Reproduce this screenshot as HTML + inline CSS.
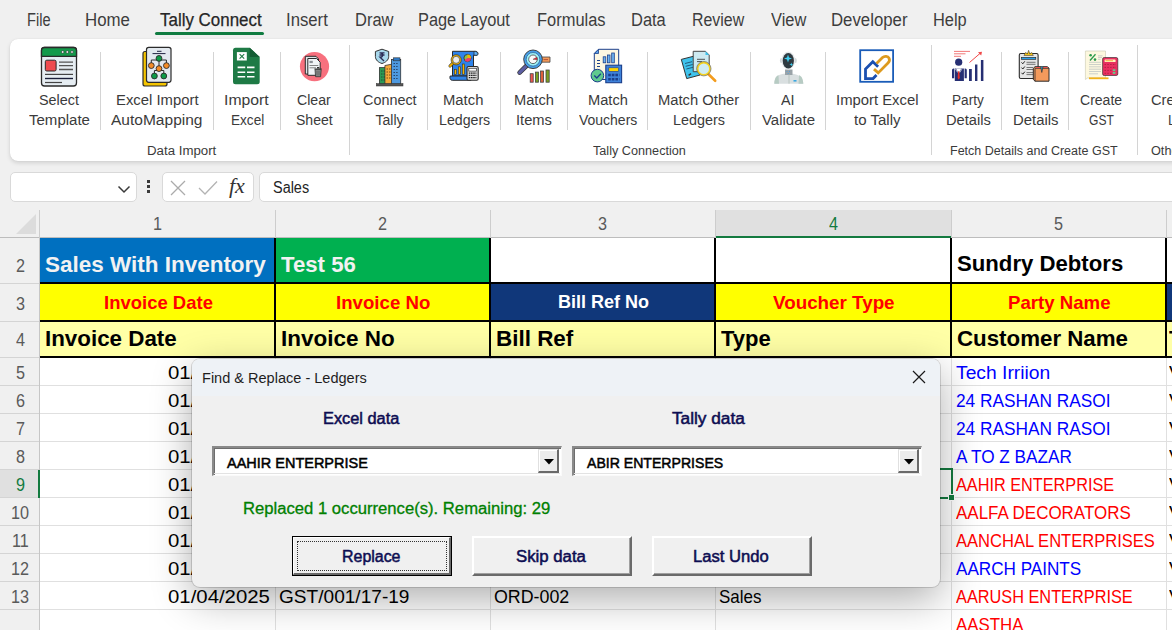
<!DOCTYPE html><html><head><meta charset="utf-8"><style>
*{margin:0;padding:0;box-sizing:border-box}
html,body{width:1172px;height:630px;overflow:hidden;background:#f0f0f0;font-family:"Liberation Sans",sans-serif;position:relative}
.a{position:absolute}
.tx{position:absolute;white-space:nowrap;line-height:1;transform-origin:0 0}
.sep{position:absolute;top:52px;height:78px;width:1px;background:#d4d4d4}
.gsep{position:absolute;top:45px;height:110px;width:1px;background:#d4d4d4}
svg{position:absolute;overflow:visible}
</style></head><body>
<div class="tx" style="left:26.80px;top:11.00px;font-size:18px;color:#3d3d3d;transform:scaleX(0.8109);">File</div>
<div class="tx" style="left:85.40px;top:11.00px;font-size:18px;color:#3d3d3d;transform:scaleX(0.9363);">Home</div>
<div class="tx" style="left:286.40px;top:11.00px;font-size:18px;color:#3d3d3d;transform:scaleX(0.9289);">Insert</div>
<div class="tx" style="left:354.50px;top:11.00px;font-size:18px;color:#3d3d3d;transform:scaleX(0.9160);">Draw</div>
<div class="tx" style="left:418.40px;top:11.00px;font-size:18px;color:#3d3d3d;transform:scaleX(0.9093);">Page Layout</div>
<div class="tx" style="left:537.20px;top:11.00px;font-size:18px;color:#3d3d3d;transform:scaleX(0.9139);">Formulas</div>
<div class="tx" style="left:630.70px;top:11.00px;font-size:18px;color:#3d3d3d;transform:scaleX(0.9141);">Data</div>
<div class="tx" style="left:692.20px;top:11.00px;font-size:18px;color:#3d3d3d;transform:scaleX(0.8841);">Review</div>
<div class="tx" style="left:770.50px;top:11.00px;font-size:18px;color:#3d3d3d;transform:scaleX(0.9121);">View</div>
<div class="tx" style="left:831.30px;top:11.00px;font-size:18px;color:#3d3d3d;transform:scaleX(0.9320);">Developer</div>
<div class="tx" style="left:933.30px;top:11.00px;font-size:18px;color:#3d3d3d;transform:scaleX(0.9111);">Help</div>
<div class="tx" style="left:160.20px;top:11.00px;font-size:18px;color:#262626;transform:scaleX(0.9409);-webkit-text-stroke:0.25px #262626;">Tally Connect</div>
<div class="a" style="left:155px;top:32px;width:109px;height:3px;border-radius:2px;background:#107c41"></div>
<div class="a" style="left:10px;top:39px;width:1200px;height:122px;background:#fff;border-radius:8px;box-shadow:0 2px 4px rgba(0,0,0,.13),0 0 1px rgba(0,0,0,.12)"></div>
<div class="sep" style="left:100px"></div>
<div class="sep" style="left:213px"></div>
<div class="sep" style="left:280px"></div>
<div class="sep" style="left:427px"></div>
<div class="sep" style="left:500px"></div>
<div class="sep" style="left:567px"></div>
<div class="sep" style="left:647px"></div>
<div class="sep" style="left:750px"></div>
<div class="sep" style="left:825px"></div>
<div class="sep" style="left:1001px"></div>
<div class="sep" style="left:1068px"></div>
<div class="gsep" style="left:349px"></div>
<div class="gsep" style="left:931px"></div>
<div class="gsep" style="left:1137px"></div>
<div class="tx" style="left:38.90px;top:93.00px;font-size:14px;color:#3b3b3b;transform:scaleX(1.0252);">Select</div>
<div class="tx" style="left:28.70px;top:113.00px;font-size:14px;color:#3b3b3b;transform:scaleX(1.0732);">Template</div>
<div class="tx" style="left:115.70px;top:93.00px;font-size:14px;color:#3b3b3b;transform:scaleX(1.0608);">Excel Import</div>
<div class="tx" style="left:111.20px;top:113.00px;font-size:14px;color:#3b3b3b;transform:scaleX(1.1087);">AutoMapping</div>
<div class="tx" style="left:224.30px;top:93.00px;font-size:14px;color:#3b3b3b;transform:scaleX(1.1262);">Import</div>
<div class="tx" style="left:230.50px;top:113.00px;font-size:14px;color:#3b3b3b;transform:scaleX(0.9699);">Excel</div>
<div class="tx" style="left:297.00px;top:93.00px;font-size:14px;color:#3b3b3b;transform:scaleX(1.0102);">Clear</div>
<div class="tx" style="left:295.60px;top:113.00px;font-size:14px;color:#3b3b3b;transform:scaleX(1.0025);">Sheet</div>
<div class="tx" style="left:363.20px;top:93.00px;font-size:14px;color:#3b3b3b;transform:scaleX(1.0278);">Connect</div>
<div class="tx" style="left:375.50px;top:113.00px;font-size:14px;color:#3b3b3b;transform:scaleX(1.0000);">Tally</div>
<div class="tx" style="left:443.30px;top:93.00px;font-size:14px;color:#3b3b3b;transform:scaleX(1.0590);">Match</div>
<div class="tx" style="left:438.60px;top:113.00px;font-size:14px;color:#3b3b3b;transform:scaleX(1.0117);">Ledgers</div>
<div class="tx" style="left:513.60px;top:93.00px;font-size:14px;color:#3b3b3b;transform:scaleX(1.0459);">Match</div>
<div class="tx" style="left:516.00px;top:113.00px;font-size:14px;color:#3b3b3b;transform:scaleX(1.0488);">Items</div>
<div class="tx" style="left:587.70px;top:93.00px;font-size:14px;color:#3b3b3b;transform:scaleX(1.0459);">Match</div>
<div class="tx" style="left:578.50px;top:113.00px;font-size:14px;color:#3b3b3b;transform:scaleX(0.9986);">Vouchers</div>
<div class="tx" style="left:658.40px;top:93.00px;font-size:14px;color:#3b3b3b;transform:scaleX(1.0545);">Match Other</div>
<div class="tx" style="left:673.40px;top:113.00px;font-size:14px;color:#3b3b3b;transform:scaleX(1.0255);">Ledgers</div>
<div class="tx" style="left:780.90px;top:93.00px;font-size:14px;color:#3b3b3b;transform:scaleX(1.0280);">AI</div>
<div class="tx" style="left:761.80px;top:113.00px;font-size:14px;color:#3b3b3b;transform:scaleX(1.0694);">Validate</div>
<div class="tx" style="left:836.30px;top:93.00px;font-size:14px;color:#3b3b3b;transform:scaleX(1.0608);">Import Excel</div>
<div class="tx" style="left:854.30px;top:113.00px;font-size:14px;color:#3b3b3b;transform:scaleX(1.0732);">to Tally</div>
<div class="tx" style="left:952.30px;top:93.00px;font-size:14px;color:#3b3b3b;transform:scaleX(0.9728);">Party</div>
<div class="tx" style="left:946.10px;top:113.00px;font-size:14px;color:#3b3b3b;transform:scaleX(1.0475);">Details</div>
<div class="tx" style="left:1020.40px;top:93.00px;font-size:14px;color:#3b3b3b;transform:scaleX(1.0613);">Item</div>
<div class="tx" style="left:1012.60px;top:113.00px;font-size:14px;color:#3b3b3b;transform:scaleX(1.0615);">Details</div>
<div class="tx" style="left:1080.30px;top:93.00px;font-size:14px;color:#3b3b3b;transform:scaleX(1.0024);">Create</div>
<div class="tx" style="left:1089.40px;top:113.00px;font-size:14px;color:#3b3b3b;transform:scaleX(0.8620);">GST</div>
<div class="tx" style="left:1150.90px;top:93.00px;font-size:14px;color:#3b3b3b;transform:scaleX(1.0470);">Cre</div>
<div class="tx" style="left:1167.50px;top:113.00px;font-size:14px;color:#3b3b3b;transform:scaleX(0.9653);">L</div>
<div class="tx" style="left:146.50px;top:145.00px;font-size:12px;color:#3b3b3b;transform:scaleX(1.1053);">Data Import</div>
<div class="tx" style="left:593.30px;top:145.00px;font-size:12px;color:#3b3b3b;transform:scaleX(1.0547);">Tally Connection</div>
<div class="tx" style="left:950.20px;top:145.00px;font-size:12px;color:#3b3b3b;transform:scaleX(1.0433);">Fetch Details and Create GST</div>
<div class="tx" style="left:1150.50px;top:145.00px;font-size:12px;color:#3b3b3b;transform:scaleX(1.0561);">Othe</div>
<svg style="left:38px;top:44px" width="42" height="46" viewBox="38 44 42 46">
<rect x="41.5" y="47.5" width="35" height="38.5" rx="3" fill="#e6edf2" stroke="#2b2b2b" stroke-width="1.3"/>
<path d="M41.5 56.3 V50.5 a3 3 0 0 1 3 -3 H73.5 a3 3 0 0 1 3 3 V56.3 Z" fill="#149a4b" stroke="#2b2b2b" stroke-width="1.3"/>
<circle cx="62.7" cy="52" r="1.3" fill="#fff" stroke="#2b2b2b" stroke-width=".6"/>
<circle cx="67.3" cy="52" r="1.3" fill="#fff" stroke="#2b2b2b" stroke-width=".6"/>
<circle cx="72" cy="52" r="1.3" fill="#fff" stroke="#2b2b2b" stroke-width=".6"/>
<rect x="45.3" y="60.2" width="10.8" height="10.8" rx="1.5" fill="#ee4b4f" stroke="#2b2b2b" stroke-width="1"/>
<path d="M59 62.2 H73 M59 65.6 H73 M59 69.5 H73" stroke="#555" stroke-width="1.3"/>
<path d="M45 74.4 H73" stroke="#444" stroke-width="1.2"/>
<path d="M45 78.5 H73" stroke="#1a1f3a" stroke-width="1.4"/>
<path d="M45 82.5 H62" stroke="#444" stroke-width="1.2"/>
</svg>
<svg style="left:140px;top:44px" width="34" height="45" viewBox="140 44 34 45">
<rect x="143" y="51.5" width="24" height="34.5" rx="2" fill="#f4c400" stroke="#2b2b2b" stroke-width="1.2"/>
<rect x="146.5" y="47.3" width="24.5" height="35" rx="2.2" fill="#e3e9ef" stroke="#2b2b2b" stroke-width="1.2"/>
<path d="M157 51.3 H161.5 M152.5 53.6 H165.5" stroke="#1f2340" stroke-width="1"/>
<path d="M151.3 65.6 V60 H166.4 V65.6 M159 58.4 V68.6 M154.4 76 V70.5 H163.8 V76" fill="none" stroke="#2b2b2b" stroke-width="1"/>
<circle cx="159" cy="58.4" r="2.9" fill="#0e9a47" stroke="#2b2b2b" stroke-width=".9"/>
<circle cx="151.3" cy="65.6" r="2.9" fill="#f28c28" stroke="#2b2b2b" stroke-width=".9"/>
<circle cx="166.4" cy="65.6" r="2.9" fill="#f28c28" stroke="#2b2b2b" stroke-width=".9"/>
<circle cx="159" cy="68.6" r="2.9" fill="#f28c28" stroke="#2b2b2b" stroke-width=".9"/>
<circle cx="154.4" cy="76" r="2.9" fill="#0e9a47" stroke="#2b2b2b" stroke-width=".9"/>
<circle cx="163.8" cy="76" r="2.9" fill="#0e9a47" stroke="#2b2b2b" stroke-width=".9"/>
</svg>
<svg style="left:230px;top:45px" width="33" height="42" viewBox="230 45 33 42">
<path d="M235.5 47.7 H249.7 L259.7 57 V81.7 a2.5 2.5 0 0 1 -2.5 2.5 H235.5 a2.5 2.5 0 0 1 -2.5 -2.5 V50.2 a2.5 2.5 0 0 1 2.5 -2.5 Z" fill="#1e7a45"/>
<path d="M249.7 47.7 V57 H259.7 Z" fill="#145c33"/>
<rect x="236.9" y="52.1" width="9.9" height="8.4" fill="#fff"/>
<path d="M239.6 54.2 L244.2 58.6 M244.2 54.2 L239.6 58.6" stroke="#1e7a45" stroke-width="1.1"/>
<path d="M237.6 67.4 H245.2 M247 67.4 H254.5 M237.6 72.2 H245.2 M247 72.2 H254.5 M237.6 76.7 H245.2 M247 76.7 H254.5" stroke="#fff" stroke-width="1.6"/>
</svg>
<svg style="left:298px;top:50px" width="33" height="34" viewBox="298 50 33 34">
<circle cx="314.5" cy="66.6" r="14.6" fill="#f7707e"/>
<path d="M305.3 56.3 H316 L318.5 59 V74 H305.3 Z" fill="#dfe5ea" stroke="#2b2b2b" stroke-width="1"/>
<path d="M307.8 58.5 H316.5 L320.2 62.2 V75.3 H307.8 Z" fill="#f1f4f7" stroke="#2b2b2b" stroke-width="1"/>
<rect x="309.5" y="60.8" width="3.3" height="2.3" fill="#8a8f96"/>
<path d="M309.5 65.5 H318.3 M309.5 67.8 H316" stroke="#777" stroke-width=".9"/>
<path d="M314.4 69 H321.8 M317 67.6 H319.3" stroke="#333" stroke-width="1.2"/>
<path d="M315 69.6 H321.2 L320.6 76.7 H315.6 Z" fill="#8c8c8c" stroke="#333" stroke-width=".8"/>
<path d="M317 71 V75.5 M319 71 V75.5" stroke="#444" stroke-width=".6"/>
</svg>
<svg style="left:373px;top:46px" width="33" height="42" viewBox="373 46 33 42">
<path d="M375.4 51.5 L382 49.2 L388.7 51.5 V56.5 C388.7 60 385.5 62.5 382 63.5 C378.5 62.5 375.4 60 375.4 56.5 Z" fill="#a8d8ec" stroke="#333" stroke-width="1"/>
<path d="M379.5 52.8 H384.5 M379.5 55 H384.5 M380 52.8 C383.5 52.8 383.5 57.2 380 57.2 L384 61" fill="none" stroke="#2b2b55" stroke-width="1.3"/>
<rect x="379.4" y="67.6" width="7.2" height="16.4" fill="#2a9a55" stroke="#333" stroke-width=".8"/>
<path d="M384.9 65.5 L392.8 64 V84 H384.9 Z" fill="#f4a93a" stroke="#333" stroke-width=".8"/>
<rect x="391.4" y="59.5" width="9.3" height="24.5" fill="#4d99e0" stroke="#333" stroke-width=".8"/>
<rect x="393.3" y="57.8" width="6.7" height="3" fill="#2f7ac6" stroke="#333" stroke-width=".6"/>
<path d="M393.6 63.5 H399 M393.6 66.5 H399 M393.6 69.5 H399 M393.6 72.5 H399 M393.6 75.5 H399 M393.6 78.5 H399" stroke="#1e3050" stroke-width="1" stroke-dasharray="1.2 1.5"/>
<path d="M381.2 71 H385 M381.2 74 H385 M381.2 77 H385 M381.2 80 H385" stroke="#1f4030" stroke-width="1" stroke-dasharray="1.2 1.2"/>
<path d="M386.5 69 H391 M386.5 72 H391 M386.5 75 H391 M386.5 78 H391" stroke="#6a4010" stroke-width=".9" stroke-dasharray="1.5 1"/>
<rect x="376.3" y="83.6" width="26.7" height="2.4" fill="#555" stroke="#333" stroke-width=".5"/>
</svg>
<svg style="left:447px;top:48px" width="35" height="36" viewBox="447 48 35 36">
<path d="M452.5 51.3 H475.5 C478 51.3 478.6 54 477 55.2 H473.5 V76 H452.5 Z" fill="#2e83ea" stroke="#2b2b2b" stroke-width="1"/>
<path d="M474 51.5 C476.5 51 478.8 53 477.5 55.2 H474 Z" fill="#5fb0f5" stroke="#2b2b2b" stroke-width=".7"/>
<path d="M450.2 76 H471 V80.3 H452.3 C450 80.3 449.5 77.5 450.2 76 Z" fill="#2e83ea" stroke="#2b2b2b" stroke-width="1"/>
<path d="M452.6 63.4 L450 66" stroke="#333" stroke-width="3" stroke-linecap="round"/>
<path d="M452.6 63.4 L450 66" stroke="#f4b400" stroke-width="1.8" stroke-linecap="round"/>
<circle cx="456.2" cy="59.8" r="5.1" fill="#f4b400" stroke="#333" stroke-width=".7"/>
<circle cx="456.2" cy="59.8" r="3.5" fill="#ececec" stroke="#333" stroke-width=".6"/>
<circle cx="467.5" cy="58" r="3.6" fill="#8fc14a" stroke="#2b2b2b" stroke-width=".8"/>
<path d="M467.5 58 V54.4 A3.6 3.6 0 0 1 471.1 58 Z" fill="#f4b400"/>
<path d="M467.5 58 H471.1 A3.6 3.6 0 0 1 464.5 60 Z" fill="#ef3a6a"/>
<rect x="454.3" y="69.3" width="2.2" height="5" fill="#f4b400" stroke="#333" stroke-width=".6"/>
<rect x="458.3" y="66.8" width="2.2" height="7.5" fill="#f4b400" stroke="#333" stroke-width=".6"/>
<rect x="462.3" y="64" width="2.2" height="10.3" fill="#f4b400" stroke="#333" stroke-width=".6"/>
<rect x="467" y="66.5" width="11.2" height="13.8" rx="1.5" fill="#dcdcdc" stroke="#2b2b2b" stroke-width="1.1"/>
<rect x="468.8" y="68.3" width="7.6" height="2.8" fill="#fff" stroke="#333" stroke-width=".7"/>
<path d="M468.8 73.2 H476.4 M468.8 75.4 H476.4 M468.8 77.6 H476.4" stroke="#222" stroke-width="1.2" stroke-dasharray="1.6 .6"/>
</svg>
<svg style="left:515px;top:48px" width="38" height="36" viewBox="515 48 38 36">
<path d="M541.5 57 H550 V62.2 H541.5 Z" fill="#f39a5a" stroke="#444" stroke-width=".8"/>
<path d="M543.5 59.6 H548" stroke="#b4543a" stroke-width="1"/>
<path d="M526.8 65.5 L519.6 72.6" stroke="#333" stroke-width="4.6" stroke-linecap="round"/>
<path d="M526.8 65.5 L519.6 72.6" stroke="#5d5fa3" stroke-width="3.2" stroke-linecap="round"/>
<circle cx="533" cy="59.3" r="9.3" fill="#48a0e8" stroke="#333" stroke-width=".9"/>
<circle cx="533" cy="59.3" r="6.8" fill="#9ff1f6" stroke="#2a5a90" stroke-width=".7"/>
<circle cx="533" cy="59.3" r="4.3" fill="#fafafa" stroke="#333" stroke-width=".7"/>
<path d="M533 59.3 L536.8 57.2 A4.3 4.3 0 0 1 537.2 59.8 Z" fill="#e8283a" stroke="#333" stroke-width=".4"/>
<rect x="530.2" y="73.7" width="3" height="8.5" fill="#f0544c" stroke="#444" stroke-width=".8"/>
<rect x="535.5" y="72.1" width="3" height="10.1" fill="#7ba020" stroke="#444" stroke-width=".8"/>
<rect x="540.6" y="71" width="3" height="11.2" fill="#e0603a" stroke="#444" stroke-width=".8"/>
<rect x="546" y="70" width="3.2" height="12.2" fill="#7ba020" stroke="#444" stroke-width=".8"/>
</svg>
<svg style="left:588px;top:47px" width="36" height="38" viewBox="588 47 36 38">
<path d="M598.5 49.3 H618.7 V79.5 H594.3 V53.5 Z" fill="#fdf7e2" stroke="#1b3f8b" stroke-width="1"/>
<path d="M598.5 49.3 V53.5 H594.3 Z" fill="#5aa0e8" stroke="#1b3f8b" stroke-width=".8"/>
<rect x="603.2" y="56.8" width="2.6" height="6" fill="#6fb3f0" stroke="#1b3f8b" stroke-width=".8"/>
<rect x="607.4" y="55" width="2.6" height="7.8" fill="#6fb3f0" stroke="#1b3f8b" stroke-width=".8"/>
<rect x="611.7" y="53" width="2.6" height="9.8" fill="#6fb3f0" stroke="#1b3f8b" stroke-width=".8"/>
<path d="M597 60.5 H600 M597 63.5 H600 M597 66.5 H600" stroke="#1b3f8b" stroke-width="1"/>
<rect x="605.8" y="65.2" width="15.8" height="17.5" fill="#3e82da" stroke="#1b3f8b" stroke-width="1.1"/>
<rect x="608.8" y="67.8" width="9.8" height="3.5" fill="#ffd400" stroke="#1b3f8b" stroke-width=".6"/>
<path d="M608.2 75 H619.4 M608.2 79.3 H619.4" stroke="#1b3f8b" stroke-width="2.4" stroke-dasharray="2.6 1"/>
<circle cx="597.4" cy="75.6" r="6.3" fill="#5fca8e" stroke="#1b3f8b" stroke-width="1"/>
<path d="M594.3 75.5 L596.8 78 L600.8 73.8" fill="none" stroke="#1b3f8b" stroke-width="1.3"/>
</svg>
<svg style="left:679px;top:48px" width="40" height="37" viewBox="679 48 40 37">
<path d="M681.3 59.4 L694.5 56 L700 75 L686.7 78.6 Z" fill="#3fc3ec" stroke="#333" stroke-width="1"/>
<path d="M685 63.5 L692 61.7 M685.7 66.3 L692.7 64.5 M686.4 69 L693.4 67.2" stroke="#1d4f70" stroke-width=".9"/>
<path d="M688.6 75.3 L691 73.7" stroke="#333" stroke-width="1.4"/>
<path d="M693.2 51.3 H705.5 L709.2 55 V71.7 H693.2 Z" fill="#cdeaf1" stroke="#444" stroke-width="1"/>
<path d="M705.5 51.3 V55 H709.2 Z" fill="#3fc3ec"/>
<path d="M697 59.3 H705 M697 61.6 H702" stroke="#444" stroke-width=".9"/>
<path d="M707.5 73.2 L715.2 80.8" stroke="#f39c1e" stroke-width="2.6" stroke-linecap="round"/>
<circle cx="703.8" cy="68.7" r="6.2" fill="#d0ecf2" stroke="#f5d21e" stroke-width="1.8"/>
<circle cx="703.8" cy="68.7" r="7.2" fill="none" stroke="#555" stroke-width=".6"/>
</svg>
<svg style="left:771px;top:48px" width="36" height="38" viewBox="771 48 36 38">
<path d="M774.3 83.7 C774.5 77.5 778 74.6 783.5 73.8 H793 C798.5 74.6 803 77.5 803.3 83.7 Z" fill="#d9dfe0"/>
<path d="M774.3 83.7 C774.5 78.5 776 76 778.5 75.3 L779 83.7 Z M803.3 83.7 C803 78.5 801.5 76 799 75.3 L798.5 83.7 Z" fill="#b7cbc3"/>
<rect x="785" y="69.5" width="7.5" height="5.5" fill="#9aa3a8"/>
<path d="M786.5 71.5 h1 M789 71.5 h1 M787.7 73.5 h1" stroke="#5aa0d8" stroke-width="1"/>
<path d="M789 74.5 V83.7" stroke="#b0bdb8" stroke-width=".8"/>
<rect x="793.5" y="80" width="3" height="1.6" fill="#3aa8e0"/>
<ellipse cx="781.2" cy="60.5" rx="1.3" ry="2.6" fill="#d4dadc"/>
<ellipse cx="795.5" cy="60.5" rx="1.3" ry="2.6" fill="#d4dadc"/>
<ellipse cx="788.3" cy="60.5" rx="6.8" ry="9" fill="#e4e8ea"/>
<ellipse cx="788.3" cy="60.7" rx="5.6" ry="7.8" fill="#2f3a40"/>
<path d="M788 54.5 L789 57.5 L792 58.5 L789 59.5 L788 62.5 L787 59.5 L784 58.5 L787 57.5 Z" fill="#3fd0f2"/>
<path d="M791.3 62.5 L791.8 64 L793.3 64.5 L791.8 65 L791.3 66.5 L790.8 65 L789.3 64.5 L790.8 64 Z" fill="#3fd0f2"/>
</svg>
<svg style="left:857px;top:47px" width="40" height="38" viewBox="857 47 40 38">
<rect x="860.2" y="50.2" width="32.9" height="31.6" fill="#fff" stroke="#1a5cb8" stroke-width="1.8"/>
<path transform="translate(0.3 1.6)" d="M877.8 65.2 L872.5 60.2 L865.2 67.5 V77 H872.8 L876.2 73.5" fill="none" stroke="#1a4fb0" stroke-width="2.8" stroke-linejoin="miter"/>
<path transform="translate(0 1.6)" d="M876.5 61.8 L882.5 56 C884.5 54 888 54.5 889 56.5 C890 58.5 889.5 60 888 61.5 L878.2 71.3 L874 67.5" fill="none" stroke="#dd9a1e" stroke-width="2.8"/>
</svg>
<svg style="left:949px;top:48px" width="38" height="36" viewBox="949 48 38 36">
<path d="M954 51.4 H970 M954 53.8 H965.5 M954 56.3 H961" stroke="#f06a6a" stroke-width=".9"/>
<path d="M969.5 62.5 L980.5 53" stroke="#f04848" stroke-width="1"/>
<path d="M978 52.3 L982 51.8 L981.2 55.5 Z" fill="#f04848"/>
<circle cx="958.7" cy="62.2" r="3.6" fill="#262f73"/>
<path d="M952 70 a1.5 1.5 0 0 1 1.5 -1.5 H954.2 V78.2 H952 Z" fill="#262f73"/>
<path d="M964.6 68.5 H965.3 a1.5 1.5 0 0 1 1.5 1.5 V78.2 H964.6 Z" fill="#262f73"/>
<path d="M954.8 68.5 H963.9 V81 H954.8 Z" fill="#262f73"/>
<path d="M956 68.5 L958.7 73.5 L961.4 68.5 Z" fill="#fff"/>
<path d="M955.3 68.8 L957.6 72.5 M962.1 68.8 L959.8 72.5" stroke="#fff" stroke-width=".6"/>
<path d="M958.1 71.2 H959.3 L959.8 78 L958.7 79.6 L957.6 78 Z" fill="#e8302a"/>
<rect x="969" y="69" width="2.8" height="12" fill="#262f73"/>
<rect x="975" y="64.5" width="2.4" height="16.5" fill="#262f73"/>
<rect x="980.9" y="60" width="2.5" height="21" fill="#262f73"/>
</svg>
<svg style="left:1016px;top:47px" width="36" height="37" viewBox="1016 47 36 37">
<rect x="1019.3" y="53.5" width="18.8" height="25" rx="1.5" fill="#e6e6e6" stroke="#2b2b2b" stroke-width="1.1"/>
<path d="M1024 55.5 L1025.5 52.5 L1027.5 53.8 L1028.6 50.3 L1029.8 53.8 L1031.8 52.5 L1033.3 55.5 Z" fill="#f4c414" stroke="#444" stroke-width=".6"/>
<rect x="1021.5" y="57.3" width="14.3" height="2" fill="#2a9ee6" stroke="#1c1c1c" stroke-width=".6"/>
<path d="M1021.5 62.4 L1022.8 63.8 L1024.8 61.3 M1021.5 67.6 L1022.8 69 L1024.8 66.5 M1021.5 72.8 L1022.8 74.2 L1024.8 71.7" fill="none" stroke="#222" stroke-width="1"/>
<path d="M1026.5 62.3 H1035.5 M1026.5 64.3 H1035.5 M1026.5 67.5 H1033 M1026.5 69.5 H1033 M1026.5 72.6 H1033 M1026.5 74.6 H1033" stroke="#555" stroke-width=".8"/>
<path d="M1033.3 68.3 L1035 66.7 H1047.5 L1049 68.3 V81.2 H1035 L1033.3 79.5 Z" fill="#f39a5c" stroke="#2b2b2b" stroke-width="1"/>
<path d="M1035 68.3 H1049 M1035 68.3 V81.2" stroke="#2b2b2b" stroke-width=".8"/>
<path d="M1036 67.5 H1040 M1043 67.5 H1047.5" stroke="#e85050" stroke-width="1.2"/>
<path d="M1040.7 66.8 L1041.8 72.5 L1043 66.8" fill="#3aa0d0" stroke="#222" stroke-width=".6"/>
</svg>
<svg style="left:1083px;top:48px" width="38" height="34" viewBox="1083 48 38 34">
<path d="M1085.4 51 H1105.5 V78 H1087.5 L1085.4 79.5 Z" fill="#fdf8df" stroke="#c8c8b0" stroke-width=".6"/>
<path d="M1090 60.5 L1095.5 54.3" stroke="#2a9a4a" stroke-width="1.3"/>
<circle cx="1090.6" cy="55.3" r="1.3" fill="#2a9a4a"/>
<circle cx="1095" cy="59.6" r="1.3" fill="#2a9a4a"/>
<path d="M1098 55.8 H1102.5 M1098 57.4 H1102 M1098 59.3 H1100.5 M1089 62.3 H1101 M1089 64.5 H1101 M1089 66.8 H1101 M1089 69.2 H1101 M1089 71.5 H1101 M1089 73.8 H1098" stroke="#b8c0c0" stroke-width=".7"/>
<rect x="1089" y="77.4" width="19.5" height="1.8" fill="#f2b218"/>
<rect x="1102.6" y="57.5" width="15.2" height="18" rx="1.6" fill="#e83060" stroke="#222" stroke-width=".6"/>
<rect x="1104.6" y="59.4" width="11" height="2.6" rx=".6" fill="#fff3c0"/>
<path d="M1105.5 60.7 H1113" stroke="#f0a020" stroke-width=".8"/>
<path d="M1104.5 64.5 H1116 M1104.5 67.4 H1116 M1104.5 70.4 H1116 M1104.5 73.3 H1112" stroke="#b81e44" stroke-width="1" stroke-dasharray="1.5 1.3"/>
<rect x="1112.8" y="69.3" width="2.6" height="1.8" fill="#5ed08a"/>
<rect x="1112.8" y="72" width="2.6" height="1.8" fill="#5ed08a"/>
</svg>
<div class="a" style="left:10px;top:172px;width:127px;height:30px;background:#fff;border:1px solid #d9d9d9;border-radius:5px"></div>
<svg style="left:116.5px;top:184.5px" width="14" height="9" viewBox="0 0 14 9"><path d="M1.5 1.5 L7 7 L12.5 1.5" fill="none" stroke="#3a3a3a" stroke-width="1.5"/></svg>
<div class="a" style="left:147px;top:180px;width:3px;height:3px;background:#3a3a3a"></div>
<div class="a" style="left:147px;top:185px;width:3px;height:3px;background:#3a3a3a"></div>
<div class="a" style="left:147px;top:190px;width:3px;height:3px;background:#3a3a3a"></div>
<div class="a" style="left:162px;top:172px;width:92px;height:30px;background:#fff;border:1px solid #d9d9d9;border-radius:5px"></div>
<svg style="left:170px;top:180px" width="16" height="16" viewBox="0 0 16 16"><path d="M1 1 L15 15 M15 1 L1 15" stroke="#ababab" stroke-width="1.3"/></svg>
<svg style="left:198px;top:180px" width="20" height="15" viewBox="0 0 20 15"><path d="M1 8 L7 14 L19 1.5" fill="none" stroke="#b3b3b3" stroke-width="1.3"/></svg>
<div class="tx" style="left:229px;top:175px;font-family:'Liberation Serif',serif;font-style:italic;font-size:22px;color:#333">fx</div>
<div class="a" style="left:259px;top:172px;width:940px;height:30px;background:#fff;border:1px solid #d9d9d9;border-radius:5px"></div>
<div class="tx" style="left:273.30px;top:180.00px;font-size:16px;color:#242424;transform:scaleX(0.9025);">Sales</div>
<div class="a" style="left:0;top:238px;width:1172px;height:392px;background:#fff"></div>
<div class="a" style="left:0;top:238px;width:39px;height:392px;background:#f0f0f0"></div>
<svg style="left:16px;top:214px" width="21" height="20" viewBox="0 0 21 20"><path d="M20 0 L20 20 L0 20 Z" fill="#dcdcdc"/></svg>
<div class="a" style="left:716px;top:210px;width:235px;height:28px;background:#e0e0e0"></div>
<div class="a" style="left:715px;top:236px;width:237px;height:2px;background:#137a3f"></div>
<div class="a" style="left:0;top:237px;width:715px;height:1px;background:#bdbdbd"></div>
<div class="a" style="left:952px;top:237px;width:220px;height:1px;background:#bdbdbd"></div>
<div class="a" style="left:39px;top:210px;width:1px;height:28px;background:#cdcdcd"></div>
<div class="a" style="left:275px;top:210px;width:1px;height:28px;background:#cdcdcd"></div>
<div class="a" style="left:490px;top:210px;width:1px;height:28px;background:#cdcdcd"></div>
<div class="a" style="left:715px;top:210px;width:1px;height:28px;background:#cdcdcd"></div>
<div class="a" style="left:951px;top:210px;width:1px;height:28px;background:#cdcdcd"></div>
<div class="a" style="left:1166px;top:210px;width:1px;height:28px;background:#cdcdcd"></div>
<div class="a" style="left:39px;top:238px;width:1px;height:392px;background:#c6c6c6"></div>
<div class="tx" style="left:152.50px;top:215.00px;font-size:18px;color:#5a5a5a;transform:scaleX(0.9000);">1</div>
<div class="tx" style="left:378.00px;top:215.00px;font-size:18px;color:#5a5a5a;transform:scaleX(0.9000);">2</div>
<div class="tx" style="left:598.00px;top:215.00px;font-size:18px;color:#5a5a5a;transform:scaleX(0.9000);">3</div>
<div class="tx" style="left:828.50px;top:215.00px;font-size:18px;color:#137a3f;transform:scaleX(0.9000);">4</div>
<div class="tx" style="left:1054.00px;top:215.00px;font-size:18px;color:#5a5a5a;transform:scaleX(0.9000);">5</div>
<div class="tx" style="left:15.50px;top:257.00px;font-size:18px;color:#5a5a5a;transform:scaleX(0.9000);">2</div>
<div class="a" style="left:0;top:283px;width:39px;height:1px;background:#d4d4d4"></div>
<div class="tx" style="left:15.50px;top:295.00px;font-size:18px;color:#5a5a5a;transform:scaleX(0.9000);">3</div>
<div class="a" style="left:0;top:321px;width:39px;height:1px;background:#d4d4d4"></div>
<div class="tx" style="left:15.50px;top:331.00px;font-size:18px;color:#5a5a5a;transform:scaleX(0.9000);">4</div>
<div class="a" style="left:0;top:357px;width:39px;height:1px;background:#d4d4d4"></div>
<div class="tx" style="left:15.50px;top:364.00px;font-size:18px;color:#5a5a5a;transform:scaleX(0.9000);">5</div>
<div class="a" style="left:0;top:385px;width:39px;height:1px;background:#d4d4d4"></div>
<div class="tx" style="left:15.50px;top:392.00px;font-size:18px;color:#5a5a5a;transform:scaleX(0.9000);">6</div>
<div class="a" style="left:0;top:413px;width:39px;height:1px;background:#d4d4d4"></div>
<div class="tx" style="left:15.50px;top:420.00px;font-size:18px;color:#5a5a5a;transform:scaleX(0.9000);">7</div>
<div class="a" style="left:0;top:441px;width:39px;height:1px;background:#d4d4d4"></div>
<div class="tx" style="left:15.50px;top:448.00px;font-size:18px;color:#5a5a5a;transform:scaleX(0.9000);">8</div>
<div class="a" style="left:0;top:469px;width:39px;height:1px;background:#d4d4d4"></div>
<div class="tx" style="left:15.50px;top:476.00px;font-size:18px;color:#137a3f;transform:scaleX(0.9000);">9</div>
<div class="a" style="left:0;top:497px;width:39px;height:1px;background:#d4d4d4"></div>
<div class="tx" style="left:11.01px;top:504.00px;font-size:18px;color:#5a5a5a;transform:scaleX(0.9000);">10</div>
<div class="a" style="left:0;top:525px;width:39px;height:1px;background:#d4d4d4"></div>
<div class="tx" style="left:11.58px;top:532.00px;font-size:18px;color:#5a5a5a;transform:scaleX(0.9000);">11</div>
<div class="a" style="left:0;top:553px;width:39px;height:1px;background:#d4d4d4"></div>
<div class="tx" style="left:11.01px;top:560.00px;font-size:18px;color:#5a5a5a;transform:scaleX(0.9000);">12</div>
<div class="a" style="left:0;top:581px;width:39px;height:1px;background:#d4d4d4"></div>
<div class="tx" style="left:11.01px;top:588.00px;font-size:18px;color:#5a5a5a;transform:scaleX(0.9000);">13</div>
<div class="a" style="left:0;top:609px;width:39px;height:1px;background:#d4d4d4"></div>
<div class="a" style="left:0;top:637px;width:39px;height:1px;background:#d4d4d4"></div>
<div class="a" style="left:0;top:470px;width:39px;height:27px;background:#e0e0e0"></div>
<div class="a" style="left:38px;top:470px;width:2px;height:28px;background:#137a3f"></div>
<div class="tx" style="left:15.50px;top:476.00px;font-size:18px;color:#137a3f;transform:scaleX(0.9000);">9</div>
<div class="a" style="left:40px;top:385px;width:1132px;height:1px;background:#e0e0e0"></div>
<div class="a" style="left:40px;top:413px;width:1132px;height:1px;background:#e0e0e0"></div>
<div class="a" style="left:40px;top:441px;width:1132px;height:1px;background:#e0e0e0"></div>
<div class="a" style="left:40px;top:469px;width:1132px;height:1px;background:#e0e0e0"></div>
<div class="a" style="left:40px;top:497px;width:1132px;height:1px;background:#e0e0e0"></div>
<div class="a" style="left:40px;top:525px;width:1132px;height:1px;background:#e0e0e0"></div>
<div class="a" style="left:40px;top:553px;width:1132px;height:1px;background:#e0e0e0"></div>
<div class="a" style="left:40px;top:581px;width:1132px;height:1px;background:#e0e0e0"></div>
<div class="a" style="left:40px;top:609px;width:1132px;height:1px;background:#e0e0e0"></div>
<div class="a" style="left:275px;top:358px;width:1px;height:272px;background:#e0e0e0"></div>
<div class="a" style="left:490px;top:358px;width:1px;height:272px;background:#e0e0e0"></div>
<div class="a" style="left:715px;top:358px;width:1px;height:272px;background:#e0e0e0"></div>
<div class="a" style="left:951px;top:358px;width:1px;height:272px;background:#e0e0e0"></div>
<div class="a" style="left:1166px;top:358px;width:1px;height:272px;background:#e0e0e0"></div>
<div class="a" style="left:40px;top:238px;width:235px;height:44px;background:#0070c0"></div>
<div class="a" style="left:40px;top:284px;width:235px;height:36px;background:#ffff00"></div>
<div class="a" style="left:40px;top:322px;width:235px;height:34px;background:#ffffa6"></div>
<div class="a" style="left:276px;top:238px;width:214px;height:44px;background:#00b050"></div>
<div class="a" style="left:276px;top:284px;width:214px;height:36px;background:#ffff00"></div>
<div class="a" style="left:276px;top:322px;width:214px;height:34px;background:#ffffa6"></div>
<div class="a" style="left:491px;top:238px;width:224px;height:44px;background:#fff"></div>
<div class="a" style="left:491px;top:284px;width:224px;height:36px;background:#10377a"></div>
<div class="a" style="left:491px;top:322px;width:224px;height:34px;background:#ffffa6"></div>
<div class="a" style="left:716px;top:238px;width:235px;height:44px;background:#fff"></div>
<div class="a" style="left:716px;top:284px;width:235px;height:36px;background:#ffff00"></div>
<div class="a" style="left:716px;top:322px;width:235px;height:34px;background:#ffffa6"></div>
<div class="a" style="left:952px;top:238px;width:214px;height:44px;background:#fff"></div>
<div class="a" style="left:952px;top:284px;width:214px;height:36px;background:#ffff00"></div>
<div class="a" style="left:952px;top:322px;width:214px;height:34px;background:#ffffa6"></div>
<div class="a" style="left:1167px;top:238px;width:5px;height:44px;background:#fff"></div>
<div class="a" style="left:1167px;top:284px;width:5px;height:36px;background:#10377a"></div>
<div class="a" style="left:1167px;top:322px;width:5px;height:34px;background:#ffffa6"></div>
<div class="a" style="left:40px;top:282px;width:1132px;height:2px;background:#000"></div>
<div class="a" style="left:40px;top:320px;width:1132px;height:2px;background:#000"></div>
<div class="a" style="left:40px;top:356px;width:1132px;height:2px;background:#000"></div>
<div class="a" style="left:274px;top:238px;width:2px;height:120px;background:#000"></div>
<div class="a" style="left:489px;top:238px;width:2px;height:120px;background:#000"></div>
<div class="a" style="left:714px;top:238px;width:2px;height:120px;background:#000"></div>
<div class="a" style="left:950px;top:238px;width:2px;height:120px;background:#000"></div>
<div class="a" style="left:1165px;top:238px;width:2px;height:120px;background:#000"></div>
<div class="tx" style="left:44.50px;top:254.00px;font-size:22px;color:#f2f2f2;font-weight:bold;transform:scaleX(1.0215);">Sales With Inventory</div>
<div class="tx" style="left:280.80px;top:254.00px;font-size:22px;color:#f2f2f2;font-weight:bold;transform:scaleX(1.0089);">Test 56</div>
<div class="tx" style="left:956.60px;top:253.00px;font-size:22px;color:#000;font-weight:bold;transform:scaleX(1.0073);">Sundry Debtors</div>
<div class="tx" style="left:103.50px;top:293.00px;font-size:19px;color:#ff0000;font-weight:bold;transform:scaleX(0.9731);">Invoice Date</div>
<div class="tx" style="left:336.00px;top:293.00px;font-size:19px;color:#ff0000;font-weight:bold;transform:scaleX(0.9818);">Invoice No</div>
<div class="tx" style="left:557.90px;top:292.00px;font-size:19px;color:#ffffff;font-weight:bold;transform:scaleX(0.9485);">Bill Ref No</div>
<div class="tx" style="left:772.60px;top:293.00px;font-size:19px;color:#ff0000;font-weight:bold;transform:scaleX(0.9899);">Voucher Type</div>
<div class="tx" style="left:1008.00px;top:293.00px;font-size:19px;color:#ff0000;font-weight:bold;transform:scaleX(0.9809);">Party Name</div>
<div class="tx" style="left:44.50px;top:328.00px;font-size:22px;color:#000;font-weight:bold;transform:scaleX(1.0164);">Invoice Date</div>
<div class="tx" style="left:280.80px;top:328.00px;font-size:22px;color:#000;font-weight:bold;transform:scaleX(1.0215);">Invoice No</div>
<div class="tx" style="left:495.90px;top:328.00px;font-size:22px;color:#000;font-weight:bold;transform:scaleX(1.0199);">Bill Ref</div>
<div class="tx" style="left:720.80px;top:328.00px;font-size:22px;color:#000;font-weight:bold;transform:scaleX(1.0016);">Type</div>
<div class="tx" style="left:957.00px;top:328.00px;font-size:22px;color:#000;font-weight:bold;transform:scaleX(1.0134);">Customer Name</div>
<div class="tx" style="left:1169.00px;top:328.00px;font-size:22px;color:#000;font-weight:bold;transform:scaleX(1.0432);">T</div>
<div class="tx" style="left:955.70px;top:364.00px;font-size:18px;color:#0000ff;transform:scaleX(1.0702);">Tech Irriion</div>
<div class="tx" style="left:1168.50px;top:364.00px;font-size:18px;color:#000;transform:scaleX(1.0443);">V</div>
<div class="tx" style="left:168.40px;top:363.00px;font-size:19px;color:#000;transform:scaleX(1.0716);">01/04/2025</div>
<div class="tx" style="left:955.70px;top:392.00px;font-size:18px;color:#0000ff;transform:scaleX(0.9597);">24 RASHAN RASOI</div>
<div class="tx" style="left:1168.50px;top:392.00px;font-size:18px;color:#000;transform:scaleX(1.0443);">V</div>
<div class="tx" style="left:168.40px;top:391.00px;font-size:19px;color:#000;transform:scaleX(1.0716);">01/04/2025</div>
<div class="tx" style="left:955.70px;top:420.00px;font-size:18px;color:#0000ff;transform:scaleX(0.9597);">24 RASHAN RASOI</div>
<div class="tx" style="left:1168.50px;top:420.00px;font-size:18px;color:#000;transform:scaleX(1.0443);">V</div>
<div class="tx" style="left:168.40px;top:419.00px;font-size:19px;color:#000;transform:scaleX(1.0716);">01/04/2025</div>
<div class="tx" style="left:955.70px;top:448.00px;font-size:18px;color:#0000ff;transform:scaleX(0.9554);">A TO Z BAZAR</div>
<div class="tx" style="left:1168.50px;top:448.00px;font-size:18px;color:#000;transform:scaleX(1.0443);">V</div>
<div class="tx" style="left:168.40px;top:447.00px;font-size:19px;color:#000;transform:scaleX(1.0716);">01/04/2025</div>
<div class="tx" style="left:955.70px;top:476.00px;font-size:18px;color:#ff0000;transform:scaleX(0.9037);">AAHIR ENTERPRISE</div>
<div class="tx" style="left:1168.50px;top:476.00px;font-size:18px;color:#000;transform:scaleX(1.0443);">V</div>
<div class="tx" style="left:168.40px;top:475.00px;font-size:19px;color:#000;transform:scaleX(1.0716);">01/04/2025</div>
<div class="tx" style="left:955.70px;top:504.00px;font-size:18px;color:#ff0000;transform:scaleX(0.9423);">AALFA DECORATORS</div>
<div class="tx" style="left:1168.50px;top:504.00px;font-size:18px;color:#000;transform:scaleX(1.0443);">V</div>
<div class="tx" style="left:168.40px;top:503.00px;font-size:19px;color:#000;transform:scaleX(1.0716);">01/04/2025</div>
<div class="tx" style="left:955.70px;top:532.00px;font-size:18px;color:#ff0000;transform:scaleX(0.9188);">AANCHAL ENTERPRISES</div>
<div class="tx" style="left:1168.50px;top:532.00px;font-size:18px;color:#000;transform:scaleX(1.0443);">V</div>
<div class="tx" style="left:168.40px;top:531.00px;font-size:19px;color:#000;transform:scaleX(1.0716);">01/04/2025</div>
<div class="tx" style="left:955.70px;top:560.00px;font-size:18px;color:#0000ff;transform:scaleX(0.9509);">AARCH PAINTS</div>
<div class="tx" style="left:1168.50px;top:560.00px;font-size:18px;color:#000;transform:scaleX(1.0443);">V</div>
<div class="tx" style="left:168.40px;top:559.00px;font-size:19px;color:#000;transform:scaleX(1.0716);">01/04/2025</div>
<div class="tx" style="left:955.70px;top:588.00px;font-size:18px;color:#ff0000;transform:scaleX(0.9060);">AARUSH ENTERPRISE</div>
<div class="tx" style="left:1168.50px;top:588.00px;font-size:18px;color:#000;transform:scaleX(1.0443);">V</div>
<div class="tx" style="left:168.40px;top:587.00px;font-size:19px;color:#000;transform:scaleX(1.0716);">01/04/2025</div>
<div class="tx" style="left:955.70px;top:616.00px;font-size:18px;color:#ff0000;transform:scaleX(0.9363);">AASTHA</div>
<div class="tx" style="left:279.30px;top:587.00px;font-size:19px;color:#000;transform:scaleX(1.0042);">GST/001/17-19</div>
<div class="tx" style="left:494.40px;top:587.00px;font-size:19px;color:#000;transform:scaleX(0.9380);">ORD-002</div>
<div class="tx" style="left:718.90px;top:587.00px;font-size:19px;color:#000;transform:scaleX(0.8926);">Sales</div>
<div class="a" style="left:715px;top:468px;width:238px;height:31px;border:2px solid #137a3f"></div>
<div class="a" style="left:949px;top:495px;width:5px;height:5px;background:#137a3f;outline:1px solid #fff"></div>
<div class="a" style="left:192px;top:359px;width:748px;height:228px;background:#f0f0f0;border-radius:8px;box-shadow:0 12px 40px rgba(0,0,0,.32),0 0 0 1px rgba(0,0,0,.14);overflow:hidden"><div style="position:absolute;left:0;top:0;width:100%;height:37px;background:#eef2f6"></div></div>
<div class="tx" style="left:201.50px;top:371.00px;font-size:14px;color:#1e1e1e;transform:scaleX(1.0380);">Find &amp; Replace - Ledgers</div>
<svg style="left:912px;top:370px" width="14" height="14" viewBox="912 370 14 14"><path d="M913 371 L925 383 M925 371 L913 383" stroke="#1a1a1a" stroke-width="1.2"/></svg>
<div class="tx" style="left:322.80px;top:411.00px;font-size:16px;color:#0d0d52;transform:scaleX(1.0214);-webkit-text-stroke:0.5px #0d0d52;">Excel data</div>
<div class="tx" style="left:672.40px;top:411.00px;font-size:16px;color:#0d0d52;transform:scaleX(1.0771);-webkit-text-stroke:0.5px #0d0d52;">Tally data</div>
<div class="a" style="left:212px;top:446px;width:350px;height:30px;background:#fff;border-top:2px solid #8a8a8a;border-left:2px solid #8a8a8a;border-bottom:1px solid #fafafa;border-right:1px solid #fafafa"></div>
<div class="a" style="left:214px;top:448px;width:347px;height:1px;background:#6e6e6e"></div>
<div class="a" style="left:214px;top:448px;width:1px;height:27px;background:#6e6e6e"></div>
<div class="a" style="left:214px;top:473px;width:346px;height:1px;background:#e3e3e3"></div>
<div class="a" style="left:538px;top:449px;width:21px;height:24px;background:#ececec;border-top:1px solid #e0e0e0;border-left:1px solid #e0e0e0;border-right:2px solid #6a6a6a;border-bottom:2px solid #6a6a6a;box-shadow:inset 1px 1px 0 #fff"></div>
<svg style="left:543.5px;top:458.5px" width="10" height="6" viewBox="0 0 10 6"><path d="M0 0 H10 L5 5.5 Z" fill="#000"/></svg>
<div class="a" style="left:572px;top:446px;width:350px;height:30px;background:#fff;border-top:2px solid #8a8a8a;border-left:2px solid #8a8a8a;border-bottom:1px solid #fafafa;border-right:1px solid #fafafa"></div>
<div class="a" style="left:574px;top:448px;width:347px;height:1px;background:#6e6e6e"></div>
<div class="a" style="left:574px;top:448px;width:1px;height:27px;background:#6e6e6e"></div>
<div class="a" style="left:574px;top:473px;width:346px;height:1px;background:#e3e3e3"></div>
<div class="a" style="left:898px;top:449px;width:21px;height:24px;background:#ececec;border-top:1px solid #e0e0e0;border-left:1px solid #e0e0e0;border-right:2px solid #6a6a6a;border-bottom:2px solid #6a6a6a;box-shadow:inset 1px 1px 0 #fff"></div>
<svg style="left:903.5px;top:458.5px" width="10" height="6" viewBox="0 0 10 6"><path d="M0 0 H10 L5 5.5 Z" fill="#000"/></svg>
<div class="tx" style="left:227.30px;top:455.00px;font-size:15px;color:#000;transform:scaleX(0.9652);-webkit-text-stroke:0.5px #000;">AAHIR ENTERPRISE</div>
<div class="tx" style="left:587.40px;top:455.00px;font-size:15px;color:#000;transform:scaleX(0.9390);-webkit-text-stroke:0.5px #000;">ABIR ENTERPRISES</div>
<div class="tx" style="left:243.20px;top:501.00px;font-size:16px;color:#008000;transform:scaleX(1.0404);-webkit-text-stroke:0.3px #008000;">Replaced 1 occurrence(s). Remaining: 29</div>
<div class="a" style="left:292px;top:536px;width:160px;height:40px;background:#000"></div>
<div class="a" style="left:293px;top:537px;width:158px;height:38px;background:#f0f0f0;border-top:1px solid #fff;border-left:1px solid #fff;border-right:2px solid #6a6a6a;border-bottom:2px solid #6a6a6a"></div>
<div class="a" style="left:297px;top:541px;width:150px;height:30px;border:1px dotted #333"></div>
<div class="a" style="left:472px;top:536px;width:160px;height:40px;background:#f0f0f0;border-top:2px solid #fff;border-left:2px solid #fff;border-right:2px solid #6a6a6a;border-bottom:2px solid #6a6a6a;box-shadow:inset -1px -1px 0 #a0a0a0, 0 0 0 0 #000"></div>
<div class="a" style="left:652px;top:536px;width:160px;height:40px;background:#f0f0f0;border-top:2px solid #fff;border-left:2px solid #fff;border-right:2px solid #6a6a6a;border-bottom:2px solid #6a6a6a;box-shadow:inset -1px -1px 0 #a0a0a0, 0 0 0 0 #000"></div>
<div class="tx" style="left:342.30px;top:549.00px;font-size:16px;color:#0d0d52;transform:scaleX(0.9963);-webkit-text-stroke:0.5px #0d0d52;">Replace</div>
<div class="tx" style="left:516.20px;top:549.00px;font-size:16px;color:#0d0d52;transform:scaleX(1.0479);-webkit-text-stroke:0.5px #0d0d52;">Skip data</div>
<div class="tx" style="left:693.40px;top:549.00px;font-size:16px;color:#0d0d52;transform:scaleX(1.0376);-webkit-text-stroke:0.5px #0d0d52;">Last Undo</div>
</body></html>
